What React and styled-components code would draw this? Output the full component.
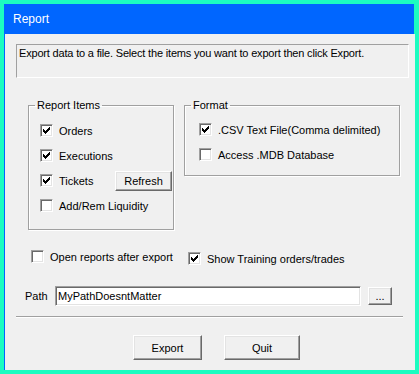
import React from 'react';
import styled, { createGlobalStyle } from 'styled-components';

const GlobalStyle = createGlobalStyle`
  html, body {
    margin: 0;
    padding: 0;
    background: #1cfcc0;
  }
  body {
    font-family: "Liberation Sans", Arial, sans-serif;
    font-size: 11px;
    color: #000;
  }
`;

const Window = styled.div`
  width: 419px;
  height: 374px;
  box-sizing: border-box;
  padding: 4px;
  background: #1cfcc0;
  display: flex;
  flex-direction: column;
`;

const TitleBar = styled.div`
  height: 30px;
  flex: none;
  margin-right: 1px;
  display: flex;
  align-items: center;
  padding-left: 9px;
  background: #0066ff;
  color: #fff;
  font-size: 12px;
`;

const Body = styled.div`
  flex: 1;
  background: #f0f0f0;
  border-left: 1px solid #0066ff;
  display: flex;
  flex-direction: column;
`;

const Description = styled.div`
  height: 30px;
  margin: 10px 6px 0 11px;
  padding: 2px 2px 0 2px;
  border-top: 1px solid #a0a0a0;
  border-left: 1px solid #a0a0a0;
  border-bottom: 1px solid #fff;
  border-right: 1px solid #fff;
  letter-spacing: -0.18px;
  line-height: 13px;
`;

const GroupRow = styled.div`
  display: flex;
  align-items: flex-start;
  gap: 10px;
  margin: 20px 0 0 23px;
`;

const Group = styled.fieldset`
  margin: 0;
  width: ${(p) => p.$width}px;
  height: ${(p) => p.$height}px;
  box-sizing: border-box;
  padding: 0;
  border: 1px solid #a0a0a0;
  box-shadow: 1px 1px 0 #fff, inset 1px 1px 0 #fff;
  min-inline-size: 0;
`;

const Legend = styled.legend`
  margin-left: 6px;
  padding: 0 2px;
  line-height: 14px;
`;

const GroupBody = styled.div`
  padding: ${(p) => p.$top}px 1px 0 ${(p) => p.$left}px;
`;

const CheckRow = styled.div`
  height: 25px;
  display: flex;
  align-items: center;
`;

const Label = styled.label`
  display: flex;
  align-items: center;
  gap: 6px;
  width: ${(p) => (p.$width ? `${p.$width}px` : 'auto')};
  margin-top: ${(p) => p.$shift || 0}px;
  white-space: nowrap;
`;

const Box = styled.span`
  width: 13px;
  height: 13px;
  box-sizing: border-box;
  flex: none;
  background: #fff;
  border-top: 1px solid #a0a0a0;
  border-left: 1px solid #a0a0a0;
  border-bottom: 1px solid #fff;
  border-right: 1px solid #fff;
  box-shadow: inset 1px 1px 0 #696969, inset -1px -1px 0 #e3e3e3;
  display: flex;
  align-items: center;
  justify-content: center;
`;

const Button = styled.button`
  width: ${(p) => p.$width}px;
  height: ${(p) => p.$height}px;
  margin-left: ${(p) => p.$ml || 0}px;
  padding: 0;
  box-sizing: border-box;
  background: #f0f0f0;
  font-family: inherit;
  font-size: 11px;
  color: #000;
  border-top: 1px solid #fff;
  border-left: 1px solid #fff;
  border-bottom: 1px solid #696969;
  border-right: 1px solid #696969;
  box-shadow: inset -1px -1px 0 #a0a0a0, inset 1px 1px 0 #e3e3e3;
`;

const OptionRow = styled.div`
  display: flex;
  align-items: flex-start;
  margin: 20px 0 0 26px;
`;

const PathRow = styled.div`
  display: flex;
  align-items: center;
  margin: 21px 0 0 20px;
`;

const PathLabel = styled.span`
  width: 30px;
`;

const PathInput = styled.input`
  width: 306px;
  height: 20px;
  box-sizing: border-box;
  margin: 0;
  padding: 0 2px;
  font-family: inherit;
  font-size: 11px;
  color: #000;
  background: #fff;
  border-top: 1px solid #a0a0a0;
  border-left: 1px solid #a0a0a0;
  border-bottom: 1px solid #fff;
  border-right: 1px solid #fff;
  box-shadow: inset 1px 1px 0 #696969, inset -1px -1px 0 #e3e3e3;
  outline: none;
`;

const Separator = styled.div`
  width: 387px;
  height: 1px;
  margin: 10px 0 0 11px;
  background: #a0a0a0;
  border-bottom: 1px solid #fff;
`;

const ButtonRow = styled.div`
  display: flex;
  gap: 22px;
  margin: 17px 0 0 128px;
`;

const CheckMark = () => (
  <svg width="7" height="7" viewBox="0 0 7 7" shapeRendering="crispEdges">
    <path
      fill="#000"
      d="M6 0h1v3h-1zM5 1h1v3h-1zM4 2h1v3h-1zM3 3h1v3h-1zM2 4h1v3h-1zM1 3h1v3h-1zM0 2h1v3h-1z"
    />
  </svg>
);

const Check = ({ checked, children, width, shift }) => (
  <Label $width={width} $shift={shift}>
    <Box>{checked && <CheckMark />}</Box>
    <span>{children}</span>
  </Label>
);

export default function App() {
  return (
    <>
      <GlobalStyle />
      <Window>
        <TitleBar>Report</TitleBar>
        <Body>
          <Description>
            Export data to a file. Select the items you want to export then click Export.
          </Description>
          <GroupRow>
            <Group $width={146} $height={132}>
              <Legend>Report Items</Legend>
              <GroupBody $top={6} $left={11}>
                <CheckRow><Check checked>Orders</Check></CheckRow>
                <CheckRow><Check checked>Executions</Check></CheckRow>
                <CheckRow>
                  <Check checked width={75}>Tickets</Check>
                  <Button $width={57} $height={20}>Refresh</Button>
                </CheckRow>
                <CheckRow><Check>Add/Rem Liquidity</Check></CheckRow>
              </GroupBody>
            </Group>
            <Group $width={216} $height={78}>
              <Legend>Format</Legend>
              <GroupBody $top={5} $left={14}>
                <CheckRow><Check checked>.CSV Text File(Comma delimited)</Check></CheckRow>
                <CheckRow><Check>Access .MDB Database</Check></CheckRow>
              </GroupBody>
            </Group>
          </GroupRow>
          <OptionRow>
            <Check width={157}>Open reports after export</Check>
            <Check checked shift={2}>Show Training orders/trades</Check>
          </OptionRow>
          <PathRow>
            <PathLabel>Path</PathLabel>
            <PathInput defaultValue="MyPathDoesntMatter" />
            <Button $width={24} $height={18} $ml={7}>...</Button>
          </PathRow>
          <Separator />
          <ButtonRow>
            <Button $width={69} $height={25}>Export</Button>
            <Button $width={76} $height={25}>Quit</Button>
          </ButtonRow>
        </Body>
      </Window>
    </>
  );
}
